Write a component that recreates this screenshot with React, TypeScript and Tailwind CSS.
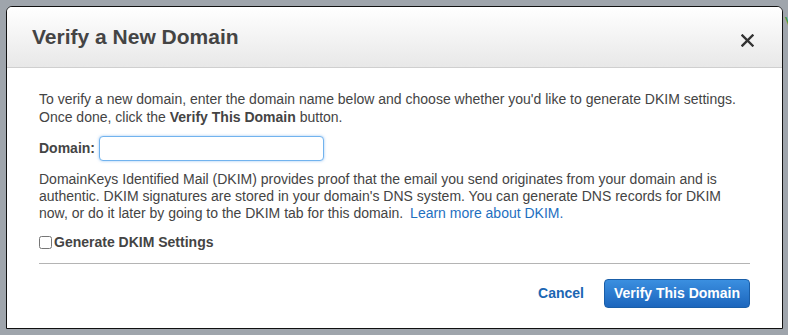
import { useState } from 'react';

export default function App(): JSX.Element {
  const [domain, setDomain] = useState('');
  const [dkim, setDkim] = useState(false);

  return (
    <div
      className="flex h-[335px] w-[788px] items-start gap-[2px] overflow-hidden bg-[#9fa5ac] pl-[6px] pt-[6px] text-[#444]"
      style={{ fontFamily: '"Liberation Sans", Arial, sans-serif' }}
    >
      {/* Modal */}
      <div className="flex h-[323px] w-[777px] shrink-0 flex-col overflow-hidden rounded-t-[6px] border border-[#111] bg-white">
        {/* Header */}
        <div className="flex h-[61px] shrink-0 items-center justify-between border-b border-[#cfcfcf] bg-gradient-to-b from-white to-[#e8e8e8] pl-[25px] pr-[28px]">
          <h1 className="text-[21px] font-bold text-[#444]">Verify a New Domain</h1>
          <button type="button" aria-label="Close" className="mt-[7px] text-[#333]">
            <svg width="13" height="13" viewBox="0 0 13 13">
              <path d="M1.5 1.5 L11.5 11.5 M11.5 1.5 L1.5 11.5" stroke="currentColor" strokeWidth="2.4" strokeLinecap="square" />
            </svg>
          </button>
        </div>

        {/* Body */}
        <div className="flex flex-1 flex-col px-[32px] pt-[22px] text-[14px]">
          <p className="leading-[18px]">
            To verify a new domain, enter the domain name below and choose whether you'd like to generate DKIM settings.
            <br />
            Once done, click the <b>Verify This Domain</b> button.
          </p>

          <div className="mt-[10px] flex items-center gap-[4px]">
            <label htmlFor="domain" className="font-bold">
              Domain:
            </label>
            <input
              id="domain"
              value={domain}
              onChange={(e) => setDomain(e.target.value)}
              className="h-[25px] w-[225px] rounded-[4px] border border-[#72b3ee] bg-white px-2 shadow-[0_0_3px_rgba(90,160,235,0.6)] outline-none"
            />
          </div>

          <p className="mt-[10px] leading-[17px]">
            DomainKeys Identified Mail (DKIM) provides proof that the email you send originates from your domain and is
            <br />
            authentic. DKIM signatures are stored in your domain's DNS system. You can generate DNS records for DKIM
            <br />
            now, or do it later by going to the DKIM tab for this domain.{'  '}
            <a href="#" className="ml-[3px] text-[#1e6fbf]">
              Learn more about DKIM.
            </a>
          </p>

          <label className="mt-[12px] flex items-center gap-[2px] font-bold leading-[17px]">
            <input
              type="checkbox"
              checked={dkim}
              onChange={() => setDkim(!dkim)}
              className="m-0 h-[13px] w-[13px]"
            />
            Generate DKIM Settings
          </label>

          <div className="mt-[12px] h-px w-full bg-[#b4b4b4]" />

          {/* Footer */}
          <div className="mt-[15px] flex items-center justify-end gap-[20px]">
            <button type="button" className="font-bold text-[#1b66b3]">
              Cancel
            </button>
            <button
              type="button"
              className="h-[29px] w-[146px] rounded-[4px] border border-[#1a5ea8] bg-gradient-to-b from-[#3b8fe0] to-[#1c66bd] font-bold text-white"
            >
              Verify This Domain
            </button>
          </div>
        </div>
      </div>

      <span className="mt-[6px] text-[13px] text-[#2e9a2e]">V</span>
    </div>
  );
}
